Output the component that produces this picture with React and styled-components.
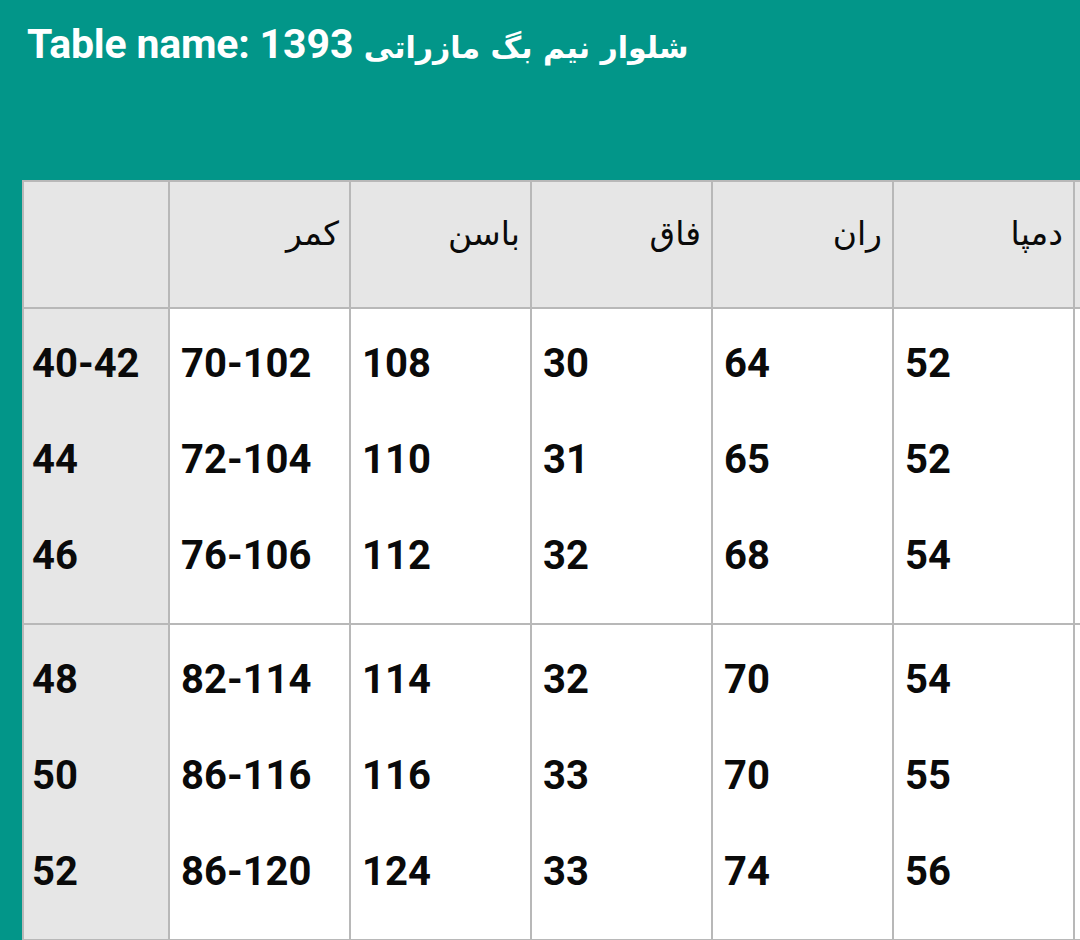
import React from "react";
import styled, { createGlobalStyle } from "styled-components";

const headers = ["", "کمر", "باسن", "فاق", "ران", "دمپا", ""];

const groups = [
  [
    ["40-42", "70-102", "108", "30", "64", "52", ""],
    ["44", "72-104", "110", "31", "65", "52", ""],
    ["46", "76-106", "112", "32", "68", "54", ""],
  ],
  [
    ["48", "82-114", "114", "32", "70", "54", ""],
    ["50", "86-116", "116", "33", "70", "55", ""],
    ["52", "86-120", "124", "33", "74", "56", ""],
  ],
];

const App = () => {
  return (
    <>
      <GlobalStyle />
      <Page>
        <Title>
          Table name: <Persian>شلوار نیم بگ مازراتی</Persian> 1393
        </Title>
        <TableWrap>
          <Grid>
            {headers.map((h, i) => (
              <HeadCell key={"h" + i}>{h}</HeadCell>
            ))}
            {groups.map((rows, g) =>
              headers.map((_, col) => (
                <BodyCell key={g + "-" + col} $first={col === 0}>
                  {rows.map((r, k) => (
                    <Line key={k}>{r[col]}</Line>
                  ))}
                </BodyCell>
              ))
            )}
          </Grid>
        </TableWrap>
      </Page>
    </>
  );
};

export default App;

const GlobalStyle = createGlobalStyle`
  html, body {
    margin: 0;
    padding: 0;
    background: #029689;
  }
`;

const Page = styled.div`
  width: 1080px;
  height: 940px;
  overflow: hidden;
  background: #029689;
  font-family: Roboto, "DejaVu Sans", sans-serif;
`;

const Title = styled.h1`
  margin: 0;
  height: 180px;
  box-sizing: border-box;
  padding: 22px 0 0 27px;
  font-size: 41px;
  line-height: 44px;
  font-weight: 700;
  color: #fff;
  letter-spacing: -0.2px;
  white-space: nowrap;
`;

const Persian = styled.span`
  font-family: "DejaVu Sans", sans-serif;
  font-size: 30px;
  letter-spacing: 0;
`;

const TableWrap = styled.div`
  padding-left: 22px;
`;

const Grid = styled.div`
  display: grid;
  grid-template-columns: 146px repeat(6, 181px);
  width: max-content;
  border-top: 2px solid #b8b8b8;
  border-left: 2px solid #b8b8b8;
`;

const HeadCell = styled.div`
  height: 127px;
  box-sizing: border-box;
  background: #e6e6e6;
  border-right: 2px solid #b8b8b8;
  border-bottom: 2px solid #b8b8b8;
  padding: 28px 10px 0 10px;
  direction: rtl;
  text-align: right;
  font-family: "DejaVu Sans", sans-serif;
  font-size: 33px;
  line-height: 48px;
  color: #0a0a0a;
`;

const BodyCell = styled.div`
  height: 316px;
  box-sizing: border-box;
  background: ${(p) => (p.$first ? "#e6e6e6" : "#fff")};
  border-right: 2px solid #b8b8b8;
  border-bottom: 2px solid #b8b8b8;
  padding: 7px 8px 0 ${(p) => (p.$first ? "8px" : "11px")};
`;

const Line = styled.div`
  height: 96px;
  line-height: 96px;
  font-family: Roboto, sans-serif;
  font-weight: 700;
  font-size: 40px;
  color: #0a0a0a;
`;
